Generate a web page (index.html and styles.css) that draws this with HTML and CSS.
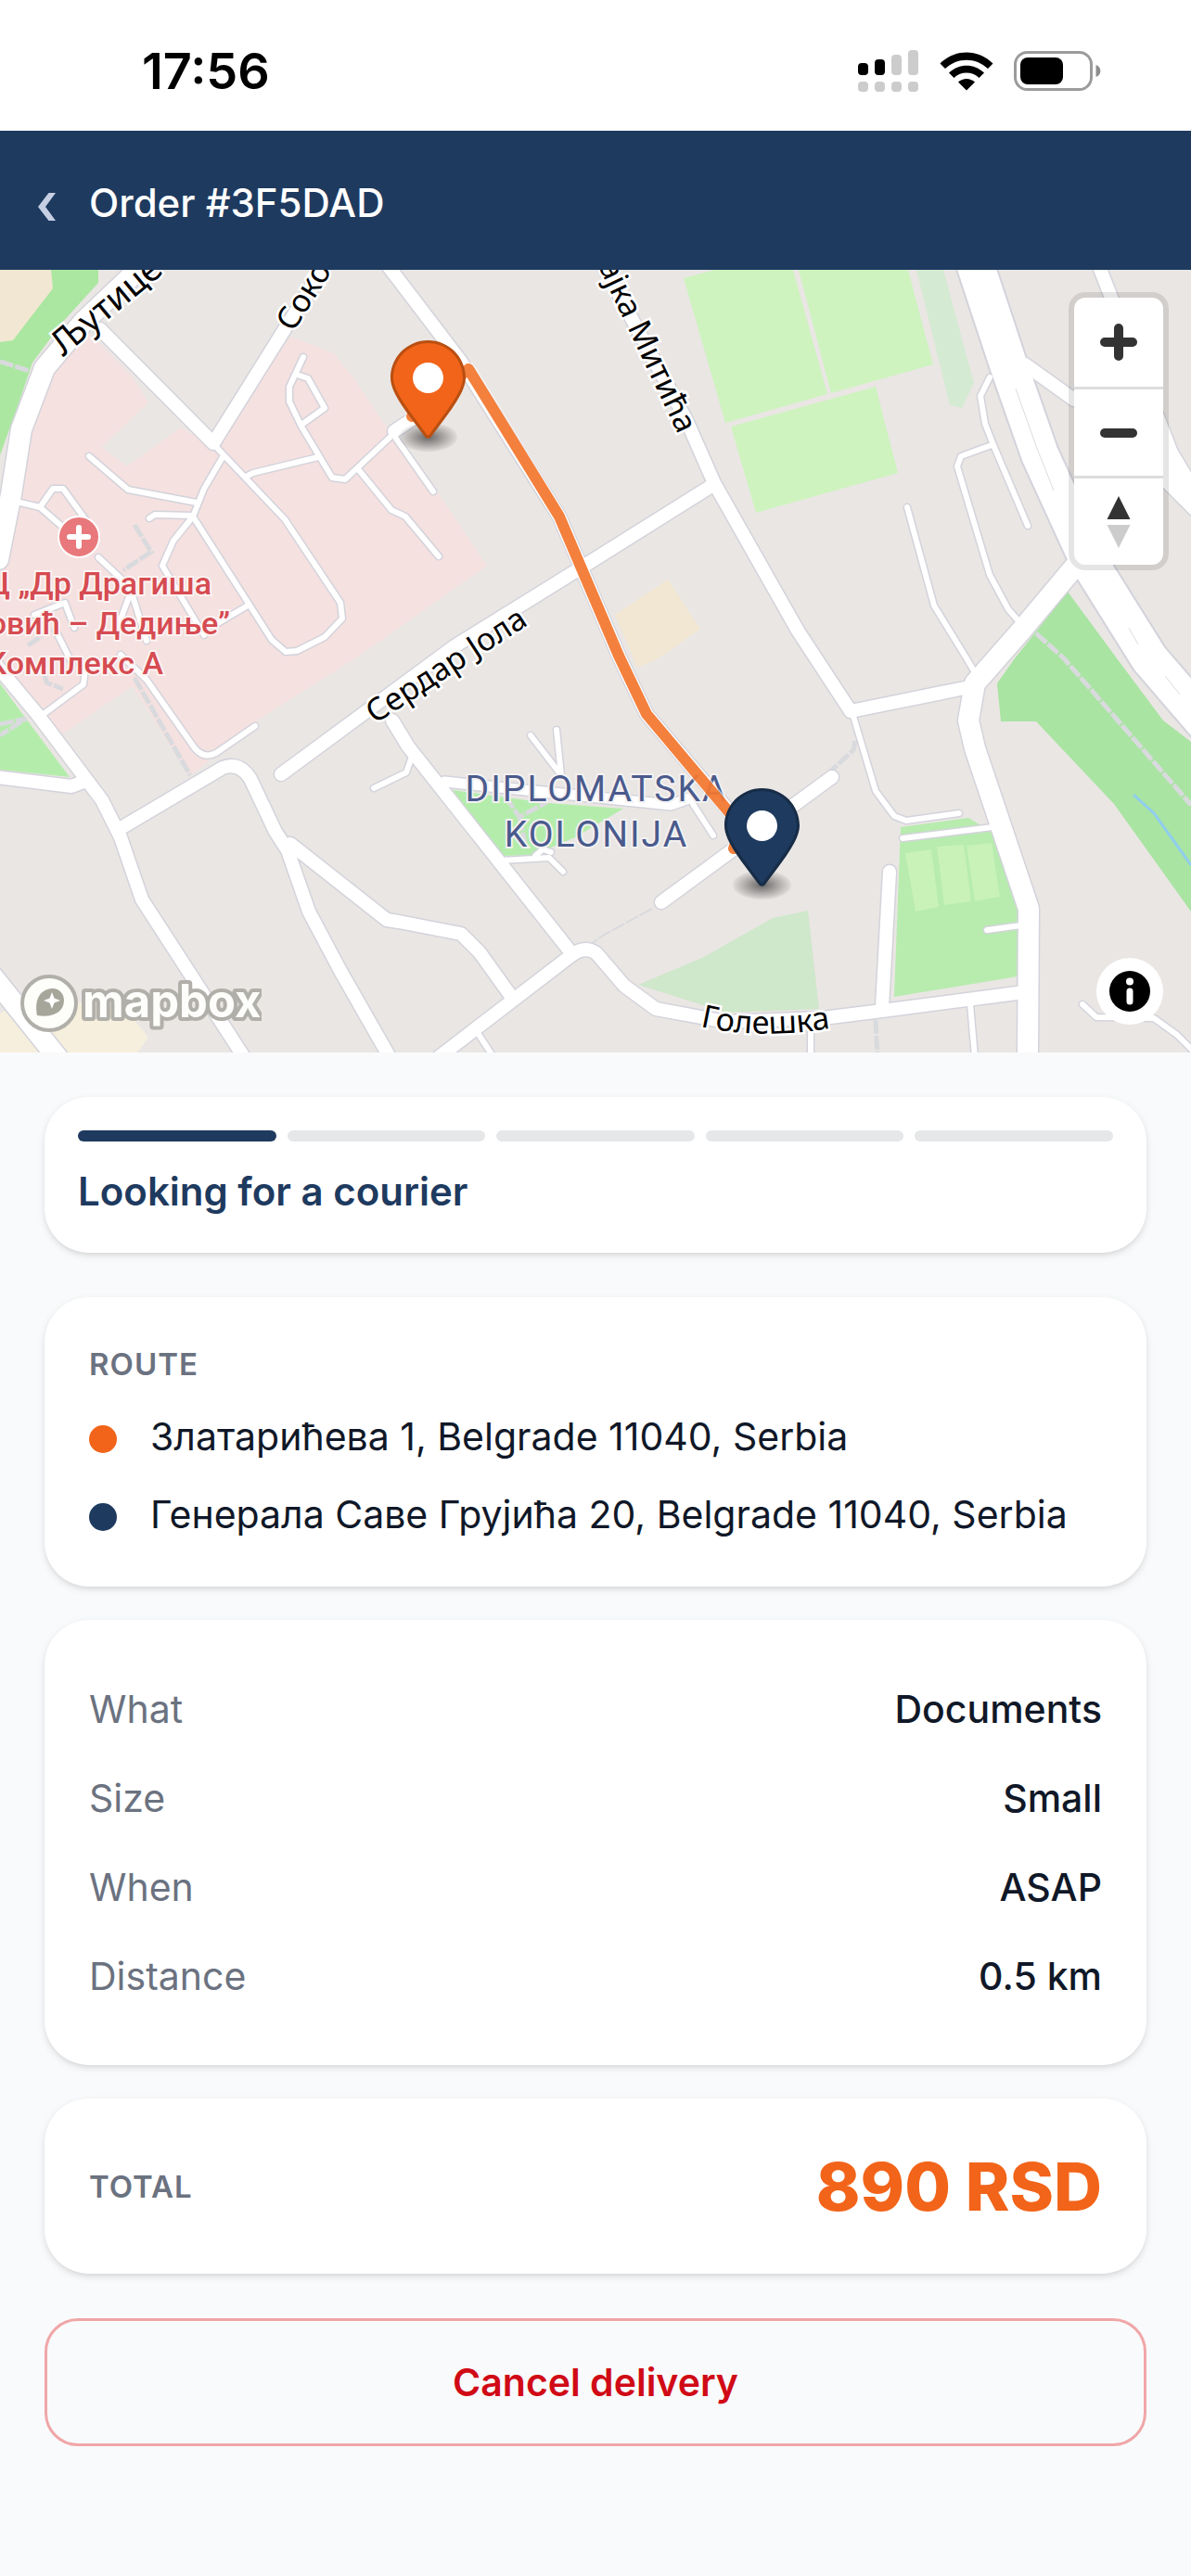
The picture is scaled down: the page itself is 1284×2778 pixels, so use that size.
FILE: index.html
```html
<!DOCTYPE html>
<html lang="en">
<head>
    <meta charset="UTF-8">
    <meta name="viewport" content="width=device-width, initial-scale=1.0">
    <title>Order #3F5DAD</title>
    <link rel="stylesheet" href="styles.css">
</head>
<body>

    <div class="status-bar">
        <span class="time">17:56</span>
        <div class="status-icons">
            <svg width="66" height="46" viewBox="0 0 66 46">
                <g fill="#000">
                    <rect x="0" y="14" width="11" height="13" rx="4"/>
                    <rect x="18" y="10" width="11" height="17" rx="4"/>
                </g>
                <g fill="#ccc">
                    <rect x="36" y="5" width="11" height="22" rx="4"/>
                    <rect x="54" y="0" width="11" height="27" rx="4"/>
                    <rect x="0" y="34" width="11" height="11" rx="4"/>
                    <rect x="18" y="34" width="11" height="11" rx="4"/>
                    <rect x="36" y="34" width="11" height="11" rx="4"/>
                    <rect x="54" y="34" width="11" height="11" rx="4"/>
                </g>
            </svg>
            <svg width="58" height="42" viewBox="0 0 58 42">
                <path d="M0.5 12.5C16.5 -3.5 41.500 -3.500 57.500 12.500L52 18C39 5.500 19 5.500 6 18Z"/>
                <path d="M10 22.500C21 12 37 12 48 22.500L42.500 28C35 20.800 23 20.800 15.500 28Z"/>
                <path d="M20 32.500C25 27.800 33 27.800 38 32.500L29 41.500Z"/>
            </svg>
            <svg width="94" height="43" viewBox="0 0 94 43">
                <rect x="1.500" y="1.500" width="82" height="40" rx="13" fill="none" stroke="#9b9b9b" stroke-width="3"/>
                <rect x="7" y="7" width="46" height="29" rx="8"/>
                <path d="M88.500 15C95 17 95 26 88.500 28Z" fill="#8e8e8e"/>
            </svg>
        </div>
    </div>

    <header class="header">
        <button type="button" class="back-btn" aria-label="Back">
            <svg width="20" height="30" viewBox="0 0 20 30">
                <path d="M12.500 0H20L9 15L20 30H12.500L1 15Z" fill="#c6cfe2"/>
            </svg>
        </button>
        <h1>Order #3F5DAD</h1>
    </header>

    <div class="map">
        <svg class="map-canvas" viewBox="0 0 1284 844" preserveAspectRatio="xMidYMid slice">
            <defs>
                <radialGradient id="shadow">
                    <stop offset="10%" stop-opacity="0.5"/>
                    <stop offset="100%" stop-opacity="0.04"/>
                </radialGradient>
                <path id="lane1" d="M68 94L162 16L210 -26"/>
                <path id="lane2" d="M316 68L390 -50"/>
                <path id="lane3" d="M645 -4L728 171L755 228"/>
                <path id="lane4" d="M404 490L600 363"/>
                <path id="lane5" d="M755 816Q820 831 900 817"/>

                <g id="roads-big">
                    <path d="M1050 -10L1087 102L1121 199L1174 315L1239 419L1300 490" stroke-width="40"/>
                </g>
                <g id="roads-wide">
                    <path d="M170 -20L90 56L48 106L23 172L12 242L-2 312"/>
                    <path d="M1157 322L1101 389L1051 446L1044 486L1051 516L1109 689L1108 850"/>
                    <path d="M-8 762L64 852"/>
                    <path d="M1254 190L1290 250M1250 215L1290 255"/>
                </g>
                <g id="roads-mid">
                    <path d="M108 64L230 187L305 67L360 -20"/>
                    <path d="M417 -6L497 99L603 266L667 416L697 479L788 586"/>
                    <path d="M767 233L630 319L490 406L303 544" />
                    <path d="M642 -20L740 162L770 230L860 389L917 476L1045 450"/>
                    <path d="M1105 102L1158 140"/>
                    <path d="M1184 -6L1210 60L1264 200"/>
                    <path d="M959 649L951 795"/>
                    <path d="M473 849L615 740Q630 728 643 737L673 772L707 797L783 811L887 807L951 799L1104 779"/>
                    <path d="M897 547L713 682"/>
                    <path d="M423 486L440 514L617 738"/>
                    <path d="M313 619L417 701L430 703L497 716L517 736L550 782"/>
                    <path d="M127 604L240 537Q258 530 270 549L297 606L310 626L333 692L367 756L420 849"/>
                    <path d="M-5 425L40 479L110 572L130 612L153 679L263 849"/>
                    <path d="M-4 547L77 557L90 552"/>
                    <path d="M425 174L452 156"/>
                </g>
                <g id="roads-park">
                    <path d="M479 552L723 577L743 570"/>
                </g>
                <g id="roads-small">
                    <path d="M1067 116L1057 136L1062 166L1071 189L1108 276"/>
                    <path d="M1069 189L1036 201L1032 212L1067 329L1087 366L1101 382"/>
                    <path d="M978 256L1007 362L1042 419L1052 436"/>
                    <path d="M919 478L944 562L964 589L977 594L1034 586"/>
                    <path d="M973 613L1070 601M1064 712L1100 707"/>
                    <path d="M1046 792L1051 849M874 815V849"/>
                    <path d="M1167 792L1182 806L1244 807L1269 825L1290 846"/>
                    <path d="M572 502L605 545L600 496M747 576L769 610"/>
                    <path d="M540 637L592 634L607 649M577 632L585 625L594 628"/>
                    <path d="M445 522L438 542L403 559M517 826L532 849"/>
                    <path d="M232 190L307 269L367 359L369 376L350 396L320 411L308 412L293 399L208 266"/>
                    <path d="M240 202L220 236L208 266L187 292L175 319L220 394"/>
                    <path d="M96 201L138 237L212 251M161 268L167 264L207 265"/>
                    <path d="M22 251L43 256L57 236L68 236L97 276M43 256L66 276M106 310L140 342L158 400M140 350L127 385"/>
                    <path d="M130 415L158 442L210 516Q220 528 233 521L275 492"/>
                    <path d="M267 362L230 384M267 222L273 219L343 202"/>
                    <path d="M327 94L312 126L312 142L325 169L358 224L372 226L422 179"/>
                    <path d="M323 114L332 117L350 149L325 167"/>
                    <path d="M387 216L422 259L437 266L473 309M427 182L467 239"/>
                    <path d="M37 372L70 359L80 386M60 389L78 425M92 430L90 447L47 479"/>
                </g>
            </defs>

            <rect width="1284" height="844" fill="#eae6e4"/>

            <!-- parks, hospital grounds, sports fields -->
            <path d="M97 69L143 116L160 143L110 191L137 212L195 170L230 192L313 72L360 90L380 115L417 170L473 242L525 319L440 379L383 419L277 486L217 536L204 546L143 449L68 500L45 480L0 425V330L22 245L35 168L60 100Z" fill="#f5e1e0"/>
            <path d="M0 0H106V14L66 58L35 100L18 150L0 200Z" fill="#abe7a1"/>
            <path d="M0 0H55L57 20L14 76L0 78Z" fill="#f2e7d2"/>
            <path d="M0 446L25 480L75 547L0 539Z" fill="#b4edab"/>
            <path d="M737 9L770 0H855L892 134L782 165ZM861 0H979L1006 102L896 133ZM788 169L944 126L968 219L815 262Z" fill="#cef3bf"/>
            <path d="M988 0H1017L1050 122L1037 149L1024 146Z" fill="#d5ead2"/>
            <path d="M1151 347L1204 419L1254 486L1284 509V692L1201 576L1117 487H1079L1075 446L1094 419Z" fill="#a9e4a2"/>
            <path d="M1222 566L1244 586L1284 642" fill="none" stroke="#8fcdf0" stroke-width="3"/>
            <path d="M720 334L755 387L710 419L687 429L663 372Z" fill="#f2e7d2"/>
            <path d="M488 561L590 575L672 581L620 612L575 631L537 632Z" fill="#b4edab"/>
            <path d="M688 771L757 742L833 699L871 691L883 797L783 801Z" fill="#cfe7ca"/>
            <path d="M971 601L1044 591L1069 606L1099 696L1097 762L964 784Z" fill="#b7ecae"/>
            <path d="M976 629L1004 625L1012 687L987 692ZM1010 622L1039 620L1047 681L1018 685ZM1042 621L1069 618L1078 676L1051 681Z" fill="#c9f2b8"/>
            <path d="M0 802L20 790H130L160 828L148 844H0Z" fill="#f6efdd"/>

            <!-- footpaths -->
            <g fill="none" stroke="#d9dadd" stroke-width="5" stroke-dasharray="15 2">
                <path d="M0 99L32 109M0 490L28 484L0 502"/>
                <path d="M1117 392L1147 419L1284 577"/>
                <path d="M922 508L920 518L894 542M944 809L946 849"/>
                <path d="M145 440L205 545M145 275L163 304L133 324"/>
                <path d="M545 568L560 590L590 574M560 590L566 618"/>
                <path d="M703 689L653 716L637 727" stroke-width="2"/>
                <path d="M45 420L50 445L68 452M30 405L45 395"/>
            </g>

            <!-- road casing, then the road itself -->
            <g fill="none" stroke="#d3d3db" stroke-linejoin="round" stroke-linecap="round">
                <use href="#roads-small" stroke-width="9"/>
                <use href="#roads-park" stroke-width="14"/>
                <use href="#roads-mid" stroke-width="17"/>
                <use href="#roads-wide" stroke-width="25"/>
                <path d="M1050 -10L1087 102L1121 199L1174 315L1239 419L1300 490" stroke-width="44"/>
            </g>
            <g fill="none" stroke="#fff" stroke-linejoin="round" stroke-linecap="round">
                <use href="#roads-small" stroke-width="6"/>
                <use href="#roads-park" stroke-width="11"/>
                <use href="#roads-mid" stroke-width="14"/>
                <use href="#roads-wide" stroke-width="22"/>
                <use href="#roads-big"/>
            </g>
            <path d="M1095 128L1117 190L1136 238M1217 386L1227 404M1256 438L1272 458" fill="none" stroke="#dcdce2" stroke-width="1"/>

            <!-- labels -->
            <g class="street-label">
                <text class="main-street"><textPath href="#lane1">Љутице</textPath></text>
                <text><textPath href="#lane2">Сокоб</textPath></text>
                <text><textPath href="#lane3">ајка Митића</textPath></text>
                <text><textPath href="#lane4">Сердар Јола</textPath></text>
                <text><textPath href="#lane5">Голешка</textPath></text>
            </g>
            <g class="area-label">
                <text x="643" y="573">DIPLOMATSKA</text>
                <text x="643" y="622">KOLONIJA</text>
            </g>
            <circle cx="85" cy="288" r="22" fill="#e8787b" stroke="#fff" stroke-width="2"/>
            <path d="M85 278V298M75 288H95" stroke="#fff" stroke-width="6" stroke-linecap="round"/>
            <g class="poi-label">
                <text x="228" y="350">Ц „Др Драгиша</text>
                <text x="248" y="393">овић – Дедиње”</text>
                <text x="176" y="436">Комплекс А</text>
            </g>

            <!-- route -->
            <path d="M444 158L505 107L603 266L667 416L697 479L792 592L796 610L791 624" fill="none" stroke="#fff" stroke-opacity="0.6" stroke-width="15" stroke-linejoin="round" stroke-linecap="round"/>
            <path d="M444 158L505 107L603 266L667 416L697 479L792 592L796 610L791 624" fill="none" stroke="#f26a1b" stroke-opacity="0.85" stroke-width="12" stroke-linejoin="round" stroke-linecap="round"/>

            <g transform="translate(421 76) scale(3)">
                <ellipse cx="13.500" cy="34.800" rx="10.500" ry="5.250" fill="url(#shadow)"/>
                <path d="M27 13.500C27 19.070 20.250 27 14.750 34.500C14.020 35.500 12.980 35.500 12.250 34.500C6.750 27 0 19.220 0 13.500C0 6.040 6.040 0 13.500 0C20.960 0 27 6.040 27 13.500Z" fill="#b94f11"/>
                <path d="M26 13.500C26 18.600 19.600 26 14 33.800C13.700 34.200 13.300 34.200 13 33.800C7.400 26 1 18.700 1 13.500C1 6.600 6.600 1 13.500 1C20.400 1 26 6.600 26 13.500Z" fill="#f26419"/>
                <circle cx="13.500" cy="13.500" r="5.500" fill="#fff"/>
            </g>
            <g transform="translate(781 559) scale(3)">
                <ellipse cx="13.500" cy="34.800" rx="10.500" ry="5.250" fill="url(#shadow)"/>
                <path d="M27 13.500C27 19.070 20.250 27 14.750 34.500C14.020 35.500 12.980 35.500 12.250 34.500C6.750 27 0 19.220 0 13.500C0 6.040 6.040 0 13.500 0C20.960 0 27 6.040 27 13.500Z" fill="#172c47"/>
                <path d="M26 13.500C26 18.600 19.600 26 14 33.800C13.700 34.200 13.300 34.200 13 33.800C7.400 26 1 18.700 1 13.500C1 6.600 6.600 1 13.500 1C20.400 1 26 6.600 26 13.500Z" fill="#1e3a5f"/>
                <circle cx="13.500" cy="13.500" r="5.500" fill="#fff"/>
            </g>
        </svg>

        <div class="map-controls">
            <button type="button" aria-label="Zoom in">
                <svg width="40" height="40" viewBox="0 0 40 40"><path d="M20 5V35M5 20H35" stroke="#333" stroke-width="10" stroke-linecap="round"/></svg>
            </button>
            <button type="button" aria-label="Zoom out">
                <svg width="40" height="40" viewBox="0 0 40 40"><path d="M5 20H35" stroke="#333" stroke-width="10" stroke-linecap="round"/></svg>
            </button>
            <button type="button" aria-label="Reset bearing to north">
                <svg width="26" height="58" viewBox="0 0 26 58"><path d="M13 1L25.500 26H0.500Z" fill="#333"/><path d="M0.500 32H25.500L13 57Z" fill="#ccc"/></svg>
            </button>
        </div>

        <a class="map-logo" href="#" aria-label="Mapbox homepage">
            <svg width="262" height="66" viewBox="0 0 262 66">
                <circle cx="33" cy="33" r="29" fill="#fdfdf9" stroke="#b1afa9" stroke-width="4"/>
                <path d="M20 46C16 26 26 17 37 17C44 17 49 23 49 30C49 42 37 49 20 46Z" fill="#a6a69b"/>
                <path d="M36 21L38.500 27.500L45 30L38.500 32.500L36 39L33.500 32.500L27 30L33.500 27.500Z" fill="#fff"/>
                <text x="69" y="48" class="logo-text">mapbox</text>
            </svg>
        </a>

        <button type="button" class="map-info" aria-label="Toggle attribution">
            <svg width="44" height="44" viewBox="0 0 44 44">
                <circle cx="22" cy="22" r="22"/>
                <circle cx="22" cy="11.500" r="4" fill="#fff"/>
                <path d="M22 22V33" stroke="#fff" stroke-width="7" stroke-linecap="round"/>
            </svg>
        </button>
    </div>

    <main class="content">
        <section class="card progress-card">
            <div class="steps">
                <span class="step done"></span>
                <span class="step"></span>
                <span class="step"></span>
                <span class="step"></span>
                <span class="step"></span>
            </div>
            <p class="status-text">Looking for a courier</p>
        </section>

        <div class="order-info">
            <section class="card route-card">
                <h2>ROUTE</h2>
                <div class="stop">
                    <span class="dot pickup"></span>
                    <span>Златарићева 1, Belgrade 11040, Serbia</span>
                </div>
                <div class="stop">
                    <span class="dot dropoff"></span>
                    <span>Генерала Саве Грујића 20, Belgrade 11040, Serbia</span>
                </div>
            </section>

            <dl class="card details">
                <div class="detail-row"><dt>What</dt><dd>Documents</dd></div>
                <div class="detail-row"><dt>Size</dt><dd>Small</dd></div>
                <div class="detail-row"><dt>When</dt><dd>ASAP</dd></div>
                <div class="detail-row"><dt>Distance</dt><dd>0.5 km</dd></div>
            </dl>

            <section class="card total">
                <h2>TOTAL</h2>
                <span class="price">890 RSD</span>
            </section>
        </div>

        <button type="button" class="cancel-btn">Cancel delivery</button>
    </main>

</body>
</html>
```

FILE: styles.css
```css
* {
    box-sizing: border-box;
}

body {
    margin: 0;
    background-color: #f9fafb;
    color: #101828;
    font-family: Inter, "Liberation Sans", sans-serif;
    font-size: 41px;
    line-height: 60px;
}

h1, h2, p, dl, dd {
    margin: 0;
}

button {
    font: inherit;
    border: none;
    padding: 0;
    cursor: pointer;
}

svg {
    display: block;
}

/* status bar */
.status-bar {
    display: flex;
    justify-content: space-between;
    align-items: center;
    height: 141px;
    padding: 12px 97px 0 153px;
    background-color: #fff;
    color: #000;
}

.time {
    font-size: 54px;
    font-weight: 600;
}

.status-icons {
    display: flex;
    align-items: center;
    gap: 22px;
}

/* header */
.header {
    display: flex;
    align-items: center;
    gap: 36px;
    padding: 48px 40px 42px;
    background-color: #1e3a5f;
    color: #fff;
}

.header h1 {
    font-size: 42px;
    font-weight: 500;
}

.back-btn {
    background: none;
    padding-top: 8px;
}

/* map */
.map {
    position: relative;
    aspect-ratio: 1284 / 844;
    overflow: hidden;
}

.map-canvas {
    width: 100%;
    height: 100%;
}

.street-label {
    font-family: "Noto Sans", sans-serif;
    font-size: 34px;
    fill: #000;
    stroke: #fff;
    stroke-width: 5px;
    paint-order: stroke;
}

.main-street {
    font-size: 38px;
}

.area-label {
    font-family: Roboto, sans-serif;
    font-size: 39px;
    letter-spacing: 2px;
    text-anchor: middle;
    fill: #4a5a8c;
    stroke: #f3f1f2;
    stroke-width: 4px;
    paint-order: stroke;
}

.poi-label {
    font-family: Roboto, sans-serif;
    font-size: 34px;
    font-weight: 500;
    text-anchor: end;
    fill: #d64b51;
    stroke: #fbf3f2;
    stroke-width: 4px;
    paint-order: stroke;
}

.map-controls {
    position: absolute;
    top: 30px;
    right: 30px;
    width: 96px;
    background-color: #fff;
    border-radius: 12px;
    box-shadow: 0 0 0 6px rgba(0, 0, 0, 0.1);
}

.map-controls button {
    display: flex;
    justify-content: center;
    align-items: center;
    width: 96px;
    height: 96px;
    background: none;
}

.map-controls button + button {
    border-top: 3px solid #ddd;
}

.map-logo {
    position: absolute;
    left: 20px;
    bottom: 20px;
}

.logo-text {
    font-family: Inter, sans-serif;
    font-size: 49px;
    font-weight: 700;
    fill: #fdfdfb;
    stroke: #b1afa9;
    stroke-width: 8px;
    stroke-linejoin: round;
    paint-order: stroke;
}

.map-info {
    position: absolute;
    right: 30px;
    bottom: 30px;
    display: flex;
    justify-content: center;
    align-items: center;
    width: 72px;
    height: 72px;
    border-radius: 50%;
    background-color: #fff;
}

/* cards */
.content {
    display: flex;
    flex-direction: column;
    gap: 48px;
    padding: 48px;
}

.order-info {
    display: flex;
    flex-direction: column;
    gap: 36px;
}

.card {
    padding: 48px;
    background-color: #fff;
    border-radius: 48px;
    box-shadow: 0 3px 9px rgba(0, 0, 0, 0.1), 0 3px 6px -3px rgba(0, 0, 0, 0.1);
}

.card h2 {
    color: #6b7280;
    font-size: 33px;
    font-weight: 600;
    line-height: 48px;
    letter-spacing: 1px;
}

.progress-card {
    padding: 36px;
}

.steps {
    display: flex;
    gap: 12px;
    margin-bottom: 24px;
}

.step {
    flex: 1;
    height: 12px;
    border-radius: 6px;
    background-color: #e5e7e9;
}

.step.done {
    background-color: #1e3a5f;
}

.status-text {
    color: #1e3a5f;
    font-size: 42px;
    font-weight: 600;
}

.route-card {
    display: flex;
    flex-direction: column;
    gap: 24px;
}

.stop {
    display: flex;
    gap: 36px;
}

.dot {
    flex: none;
    width: 30px;
    height: 30px;
    margin-top: 18px;
    border-radius: 50%;
}

.pickup {
    background-color: #f26419;
}

.dropoff {
    background-color: #1e3a5f;
}

.detail-row {
    display: flex;
    justify-content: space-between;
    padding: 18px 0;
}

.detail-row dt {
    color: #6b7280;
}

.detail-row dd {
    font-weight: 500;
}

.total {
    display: flex;
    justify-content: space-between;
    align-items: center;
}

.price {
    color: #f26419;
    font-size: 72px;
    font-weight: 800;
    line-height: 93px;
}

.cancel-btn {
    padding: 36px;
    border: 3px solid #f0a6a8;
    border-radius: 36px;
    background: none;
    color: #d00b16;
    font-weight: 600;
}
```
